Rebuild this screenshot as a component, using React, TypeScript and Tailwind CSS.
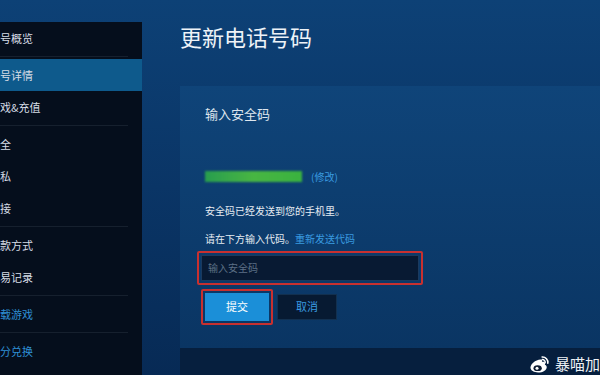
import React from 'react';

const font = { fontFamily: '"Noto Sans CJK SC", "Noto Sans", sans-serif' };

type NavItem = { label: string; active?: boolean; link?: boolean; sep?: boolean };

// labels are only the part that shows past the left edge of the window
const navItems: NavItem[] = [
  { label: '号概览', sep: true },
  { label: '号详情', active: true },
  { label: '戏&充值', sep: true },
  { label: '全' },
  { label: '私' },
  { label: '接', sep: true },
  { label: '款方式' },
  { label: '易记录', sep: true },
  { label: '载游戏', link: true, sep: true },
  { label: '分兑换', link: true },
];

function WeiboLogo() {
  return (
    <svg width="22" height="18" viewBox="0 0 24 20" aria-hidden="true">
      <path
        d="M9.5 6.2c2.7-1.6 5.3-1.7 5.9-.3.3.7.1 1.4-.2 2 .9-.3 2.5-.6 3.3.3.6.7.4 1.7-.1 2.6 1 .3 2.2 1.1 2.2 2.7 0 3-4.3 6-9.6 6C6.6 19.5 2.5 17.4 2.5 14c0-2.4 2-5.3 5-7.1z"
        fill="#fff"
      />
      <ellipse cx="10.5" cy="14.6" rx="4.6" ry="3.3" fill="#0b1a30" />
      <circle cx="9.8" cy="14.8" r="1.7" fill="#fff" />
      <path d="M15.5 2.2a6 6 0 0 1 6.3 6.8" stroke="#fff" strokeWidth="1.8" fill="none" strokeLinecap="round" />
      <path d="M15.6 5.1a3 3 0 0 1 3.3 3.4" stroke="#fff" strokeWidth="1.6" fill="none" strokeLinecap="round" />
    </svg>
  );
}

export default function App() {
  return (
    <div
      className="relative w-[600px] h-[375px] overflow-hidden bg-gradient-to-b from-[#0d4176] via-[#0a3566] to-[#072a55] text-white"
      style={font}
    >
      <div className="flex h-full">
        {/* Sidebar */}
        <div className="w-[142px] shrink-0 pt-[22px]">
          <div className="h-full bg-[#050e1c] flex flex-col">
            {navItems.map((item) => (
              <div key={item.label}>
                <div className={`h-[32px] flex items-center ${item.active ? 'bg-[#0e5a8c]' : ''}`}>
                  <span
                    className={`text-[11px] whitespace-nowrap ${item.link ? 'text-[#2f8fd4]' : 'text-[#d6dde6]'}`}
                  >
                    {item.label}
                  </span>
                </div>
                {item.sep && (
                  <div className="h-[5px] flex items-center">
                    <div className="h-px w-[128px] bg-[#16202e]" />
                  </div>
                )}
              </div>
            ))}
          </div>
        </div>

        {/* Main */}
        <div className="flex-1 pl-[38px] flex flex-col">
          <h1 className="mt-[21px] text-[22px] leading-[30px] text-[#eef3f8] whitespace-nowrap">更新电话号码</h1>

          <div className="mt-[35px] h-[262px] bg-gradient-to-b from-[#0f4479] to-[#0a3563] pl-[25px] pt-[18px]">
            <div className="text-[13px] text-[#dfe6ee]">输入安全码</div>

            <div className="mt-[45px] flex items-center">
              <div className="w-[97px] h-[11px] bg-gradient-to-r from-[#2aa84a] via-[#4fc33e] to-[#3fbf3a] opacity-90 blur-[1px]" />
              <span className="ml-[9px] text-[10px] text-[#3a9be0]">(修改)</span>
            </div>

            <div className="mt-[19px] text-[10px] text-[#e6ecf2]">安全码已经发送到您的手机里。</div>
            <div className="mt-[13px] text-[10px] text-[#e6ecf2]">
              请在下方输入代码。<span className="text-[#3a9be0]">重新发送代码</span>
            </div>

            <div className="mt-[5px] -ml-[8px] w-[226px] h-[34px] border-2 border-[#c8302f] rounded-[2px] p-[2px]">
              <div className="h-full bg-[#081a33] border border-[#1b3a5e] flex items-center pl-[6px]">
                <span className="text-[10px] text-[#5d7186]">输入安全码</span>
              </div>
            </div>

            <div className="mt-[4px] flex items-center">
              <div className="-ml-[4px] w-[72px] h-[36px] border-2 border-[#c8302f] rounded-[2px] p-[2px]">
                <div className="h-full bg-[#1b8fd8] flex items-center justify-center text-[11px] text-white">提交</div>
              </div>
              <div className="ml-[4px] w-[60px] h-[26px] bg-[#071a32] border border-[#12304f] flex items-center justify-center text-[11px] text-[#3a9be0]">
                取消
              </div>
            </div>
          </div>

          <div className="flex-1 bg-[#061f3e] flex items-center justify-end">
            <div className="flex items-center gap-[5px] mt-[4px]">
              <WeiboLogo />
              <span className="text-[15px] leading-none text-[#eef2f6]">暴喵加</span>
            </div>
          </div>
        </div>
      </div>
    </div>
  );
}
